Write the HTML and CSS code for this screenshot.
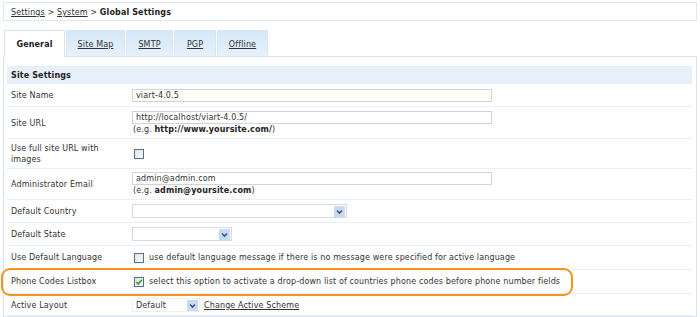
FILE: index.html
```html
<!DOCTYPE html>
<html>
<head>
<meta charset="utf-8">
<link rel="stylesheet" href="styles.css">
</head>
<body>
<div class="page">
  <div class="crumbs"><a href="#">Settings</a> &gt; <a href="#">System</a> &gt; <b>Global Settings</b></div>
  <div class="tabs">
    <div class="tab active">General</div>
    <div class="tab w-map"><a href="#">Site Map</a></div>
    <div class="tab w-smtp"><a href="#">SMTP</a></div>
    <div class="tab w-pgp"><a href="#">PGP</a></div>
    <div class="tab w-off"><a href="#">Offline</a></div>
  </div>
  <div class="panel">
    <div class="head">Site Settings</div>
    <div class="row">
      <div class="lbl">Site Name</div>
      <div class="val"><div class="input cream">viart-4.0.5</div></div>
    </div>
    <div class="row row-two">
      <div class="lbl">Site URL</div>
      <div class="val"><div class="input">http://localhost/viart-4.0.5/</div><div class="hint">(e.g. <b>http://www.yoursite.com/</b>)</div></div>
    </div>
    <div class="row row-two">
      <div class="lbl">Use full site URL with images</div>
      <div class="val"><span class="cb"></span></div>
    </div>
    <div class="row row-two tight">
      <div class="lbl">Administrator Email</div>
      <div class="val"><div class="input">admin@admin.com</div><div class="hint">(e.g. <b>admin@yoursite.com</b>)</div></div>
    </div>
    <div class="row">
      <div class="lbl">Default Country</div>
      <div class="val"><div class="select s-country"><span class="sel-text"></span><span class="arrow"><svg width="11" height="11" viewBox="0 0 11 11"><path d="M3 4.5 L5.5 7 L8 4.5" fill="none" stroke="#34558b" stroke-width="1.6"/></svg></span></div></div>
    </div>
    <div class="row">
      <div class="lbl">Default State</div>
      <div class="val"><div class="select s-state"><span class="sel-text"></span><span class="arrow"><svg width="11" height="11" viewBox="0 0 11 11"><path d="M3 4.5 L5.5 7 L8 4.5" fill="none" stroke="#34558b" stroke-width="1.6"/></svg></span></div></div>
    </div>
    <div class="row row-check">
      <div class="lbl">Use Default Language</div>
      <div class="val inline"><span class="cb"></span><span>use default language message if there is no message were specified for active language</span></div>
    </div>
    <div class="row row-check">
      <div class="lbl">Phone Codes Listbox</div>
      <div class="val inline"><span class="cb checked"><svg width="8" height="8" viewBox="0 0 8 8"><path d="M1.2 4 L3.2 6 L6.8 1.8" fill="none" stroke="#22a52a" stroke-width="1.6"/></svg></span><span>select this option to activate a drop-down list of countries phone codes before phone number fields</span></div>
      <div class="mark"></div>
    </div>
    <div class="row row-last">
      <div class="lbl">Active Layout</div>
      <div class="val inline"><div class="select s-layout"><span class="sel-text">Default</span><span class="arrow"><svg width="11" height="11" viewBox="0 0 11 11"><path d="M3 4.5 L5.5 7 L8 4.5" fill="none" stroke="#34558b" stroke-width="1.6"/></svg></span></div><a href="#" class="scheme">Change Active Scheme</a></div>
    </div>
  </div>
</div>
</body>
</html>
```
FILE: styles.css
```css
html, body {
  margin: 0;
  padding: 0;
  background: #fff;
}
body {
  font-family: "DejaVu Sans", Verdana, sans-serif;
  font-size: 8px;
  line-height: 11px;
  letter-spacing: 0.13px;
  color: #333;
}
a {
  color: #333;
  text-decoration: underline;
}
.page {
  padding: 2px 3px 0 3px;
}
.crumbs {
  border: 1px solid #dde9f2;
  height: 17px;
  line-height: 19px;
  padding-left: 7px;
}
.crumbs b {
  color: #222;
}
.tabs {
  display: flex;
  margin-top: 9px;
  padding-left: 1px;
}
.tab {
  height: 25px;
  line-height: 27px;
  text-align: center;
  border: 1px solid #d6e5f1;
  border-bottom: none;
  background: linear-gradient(#d6e8f8, #e6f1fb);
  margin-right: 1px;
}
.tab.active {
  background: #fff;
  width: 59px;
  font-weight: bold;
  color: #222;
  height: 26px;
  margin-bottom: -1px;
  position: relative;
  z-index: 1;
}
.w-map { width: 57px; }
.w-smtp { width: 45px; }
.w-pgp { width: 40px; }
.w-off { width: 49px; }
.panel {
  border: 1px solid #d6e5f1;
  padding: 9px 4px 0 3px;
}
.head {
  background: #e7f0fa;
  height: 18px;
  line-height: 19px;
  font-weight: bold;
  padding-left: 4px;
  color: #222;
  margin-bottom: 1px;
}
.row {
  display: grid;
  grid-template-columns: 125px 1fr;
  align-items: center;
  border-bottom: 1px solid #e8f0f6;
  padding: 4px 0;
  position: relative;
}
.row-two {
  padding: 4px 0 3px;
}
.row-two.tight {
  padding: 3px 0 3px;
}
.row-check {
  padding: 6px 0;
}
.row-last {
  padding: 4px 0 3px;
}
.lbl {
  padding-left: 4px;
  padding-right: 12px;
}
.val.inline {
  display: flex;
  align-items: center;
}
.input {
  box-sizing: border-box;
  width: 360px;
  height: 13px;
  border: 1px solid #d4d2e0;
  line-height: 11px;
  padding-left: 3px;
  background: #fff;
}
.input.cream {
  background: #fffef6;
}
.hint {
  padding-left: 1px;
}
.hint b {
  color: #222;
}
.cb {
  box-sizing: border-box;
  display: inline-block;
  width: 10px;
  height: 10px;
  border: 1px solid #4f6f94;
  background: linear-gradient(135deg, #e2e2dd, #fbfbf9);
  margin-left: 2px;
  margin-right: 5px;
  vertical-align: middle;
}
.cb svg {
  display: block;
}
.select {
  box-sizing: border-box;
  display: flex;
  justify-content: space-between;
  align-items: center;
  height: 14px;
  border: 1px solid #dad9e3;
  background: #fff;
  padding: 0 1px 0 3px;
}
.s-country { width: 215px; }
.s-state { width: 100px; }
.s-layout { width: 68px; border-color: #f0f0f4; }
.arrow {
  display: block;
  width: 11px;
  height: 11px;
  background: #c9dbf3;
}
.arrow svg {
  display: block;
}
.scheme {
  margin-left: 4px;
}
.mark {
  position: absolute;
  left: -6px;
  top: -2px;
  width: 572px;
  height: 28px;
  box-sizing: border-box;
  border: 2px solid #f7931e;
  border-radius: 9px;
  pointer-events: none;
}
```
